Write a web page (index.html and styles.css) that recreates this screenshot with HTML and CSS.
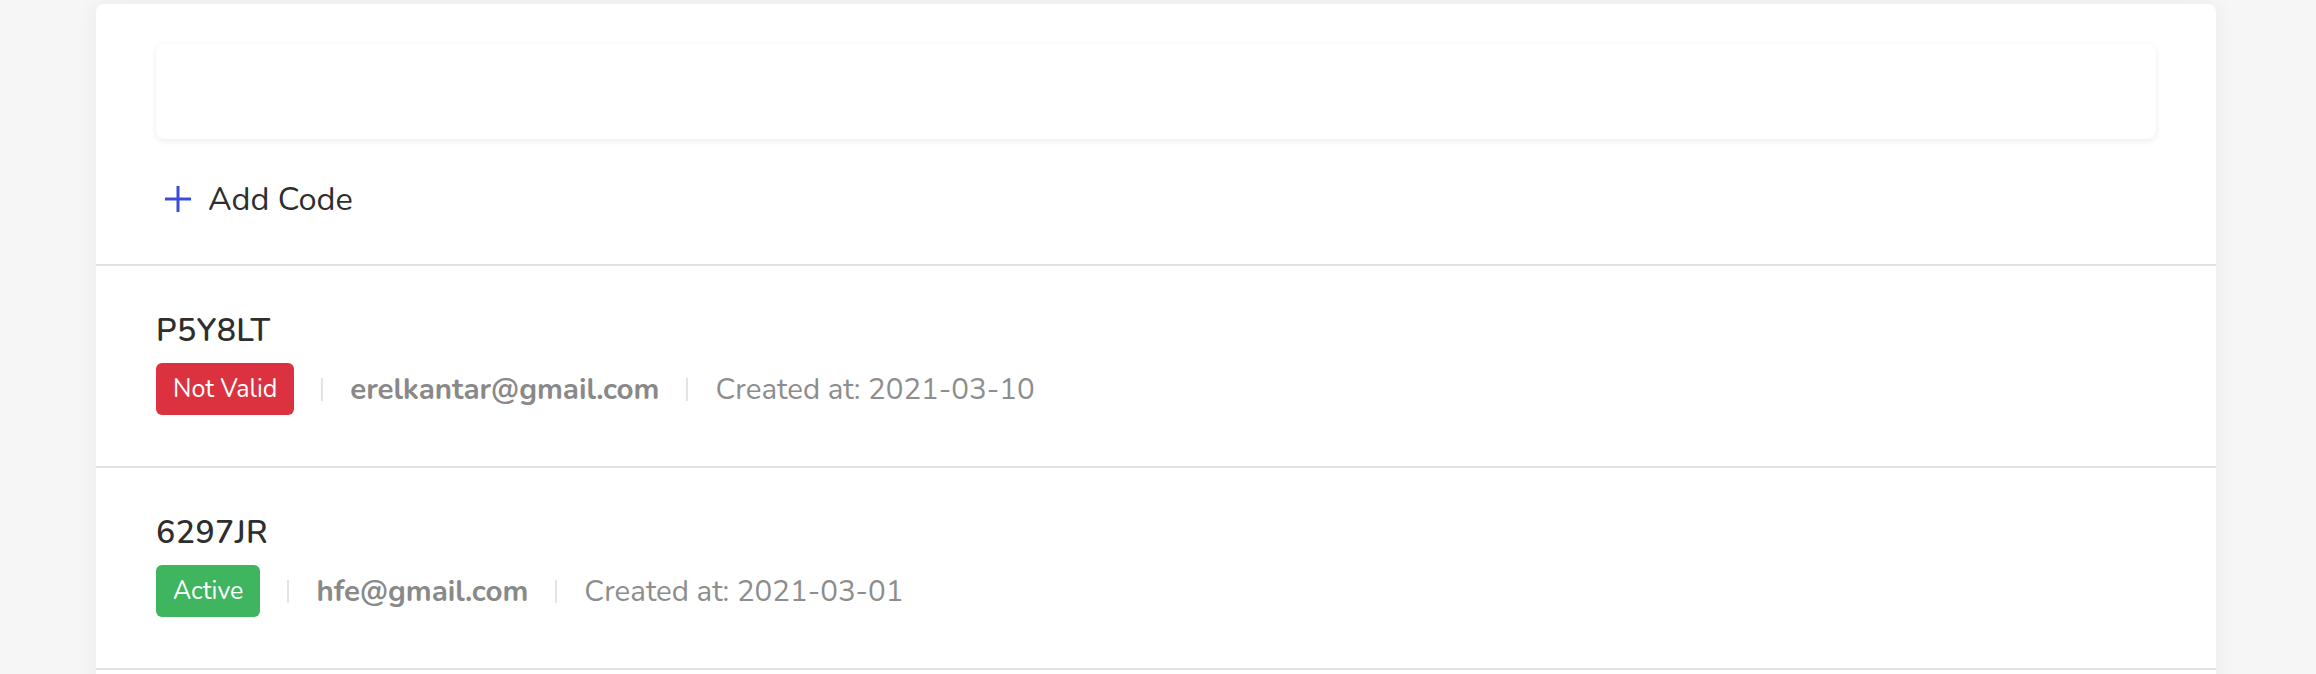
FILE: index.html
```html
<!DOCTYPE html>
<html lang="en">
<head>
  <meta charset="UTF-8">
  <title>Codes</title>
  <link rel="stylesheet" href="styles.css">
</head>
<body>
<div class="page">
  <div class="card">
    <div class="top">
      <div class="search-box"></div>
      <div class="add-code">
        <svg class="plus" viewBox="0 0 26 26" width="26" height="26">
          <line x1="13" y1="0" x2="13" y2="26" stroke="#3a4dd6" stroke-width="3"/>
          <line x1="0" y1="13" x2="26" y2="13" stroke="#3a4dd6" stroke-width="3"/>
        </svg>
        <span>Add Code</span>
      </div>
    </div>

    <div class="code-row">
      <div class="code">P5Y8LT</div>
      <div class="meta">
        <span class="badge badge-red">Not Valid</span>
        <span class="sep"></span>
        <span class="email">erelkantar@gmail.com</span>
        <span class="sep"></span>
        <span class="created">Created at: 2021-03-10</span>
      </div>
    </div>

    <div class="code-row">
      <div class="code">6297JR</div>
      <div class="meta">
        <span class="badge badge-green">Active</span>
        <span class="sep"></span>
        <span class="email">hfe@gmail.com</span>
        <span class="sep"></span>
        <span class="created">Created at: 2021-03-01</span>
      </div>
    </div>

    <div class="code-row">
      <div class="code">&nbsp;</div>
    </div>
  </div>
</div>
</body>
</html>
```

FILE: styles.css
```css
body {
  margin: 0;
  background: #f6f6f6;
  font-family: "Nunito", "Lato", "Open Sans", sans-serif;
  color: #2e2e2e;
  overflow: hidden;
}

.page {
  padding: 4px 100px 0 96px;
}

.card {
  background: #fff;
  border-radius: 8px 8px 0 0;
  box-shadow: 0 0 24px rgba(0, 0, 0, 0.05);
}

.top {
  padding: 40px 60px 0;
  height: 220px;
  border-bottom: 2px solid #e2e2e2;
}

.search-box {
  height: 95px;
  border-radius: 8px;
  background: #fff;
  box-shadow: 0 2px 6px rgba(0, 0, 0, 0.08);
}

.add-code {
  display: flex;
  align-items: center;
  gap: 17px;
  margin-top: 38px;
  padding-left: 9px;
  font-size: 32.5px;
  color: #2e2e2e;
}

.code-row {
  height: 200px;
  padding: 0 60px;
  border-bottom: 2px solid #e2e2e2;
}

.code {
  padding-top: 45px;
  font-size: 32px;
  font-weight: 600;
  letter-spacing: 0.5px;
  line-height: 40px;
  color: #2e2e2e;
}

.meta {
  display: flex;
  align-items: center;
  margin-top: 12px;
  font-size: 29.5px;
}

.badge {
  display: inline-block;
  height: 52px;
  line-height: 52px;
  padding: 0 17px;
  border-radius: 6px;
  color: #fff;
  font-size: 25px;
}

.badge-red {
  background: #dc3240;
}

.badge-green {
  background: #3fb55f;
}

.sep {
  width: 2px;
  height: 23px;
  margin: 0 27px;
  background: #e4e4e4;
}

.email {
  font-weight: bold;
  color: #898989;
}

.created {
  color: #8d8d8d;
}
```
